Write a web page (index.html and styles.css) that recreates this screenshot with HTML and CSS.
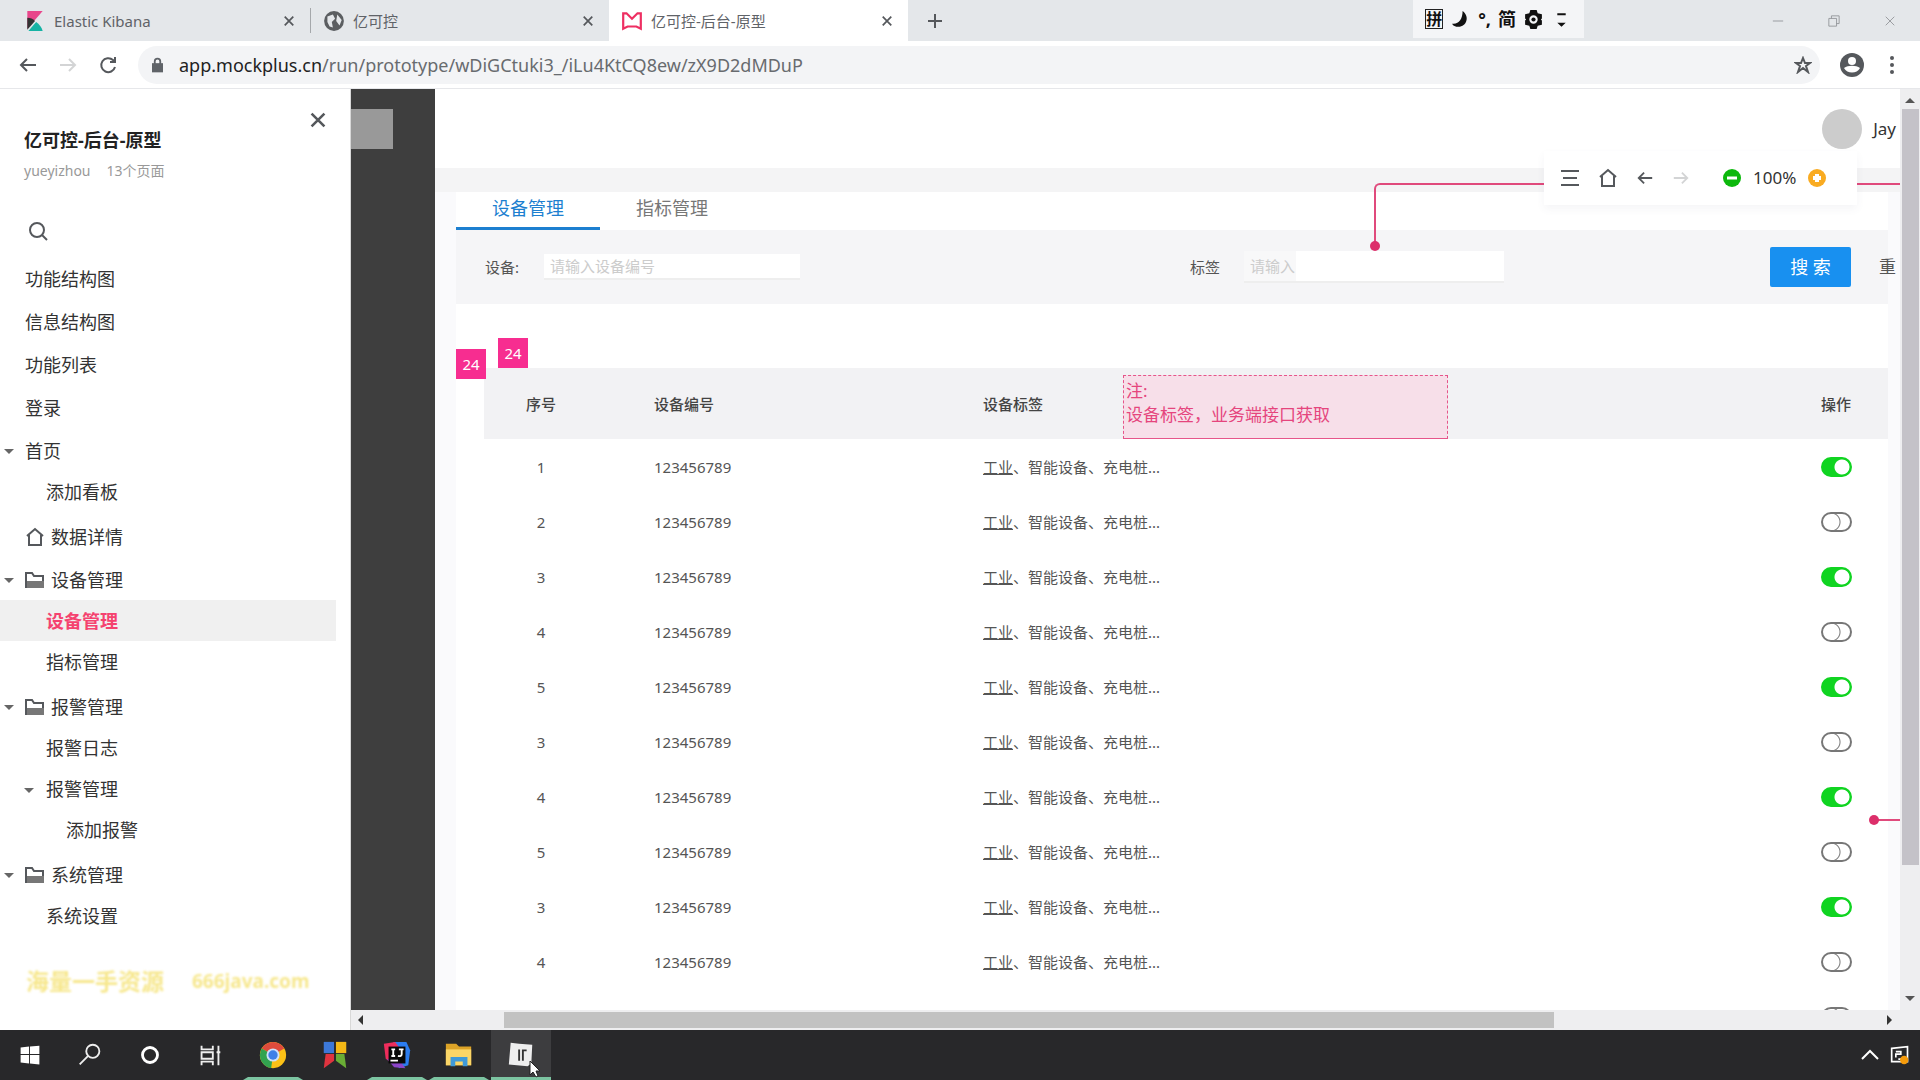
FILE: index.html
```html
<!DOCTYPE html>
<html lang="zh-CN">
<head>
<meta charset="utf-8">
<title>亿可控-后台-原型</title>
<link rel="stylesheet" href="styles.css">
</head>
<body>
<svg class="defs" aria-hidden="true">
  <symbol id="i-close" viewBox="0 0 14 14"><path d="M2 2l10 10M12 2L2 12"/></symbol>
  <symbol id="i-back" viewBox="0 0 20 20"><path d="M18 10H3M9 4l-6 6 6 6"/></symbol>
  <symbol id="i-forward" viewBox="0 0 20 20"><path d="M2 10h15M11 4l6 6-6 6"/></symbol>
  <symbol id="i-home" viewBox="0 0 20 20"><path d="M2 9l8-7 8 7M4 8v10h12V8"/></symbol>
  <symbol id="i-folder" viewBox="0 0 20 18"><path d="M1 16V2h6l2 3h9v11z"/><path class="fill" d="M2 10h17v7H2z"/></symbol>
</svg>
<header class="browser">
  <div class="tabstrip">
    <div class="btab first">
      <svg class="favicon" viewBox="0 0 20 20"><path fill="#e8478b" d="M3 1h14L3 17z"/><path fill="#333" d="M3 7c3 0 5 1 7 3l-7 8z"/><path fill="#16b3a4" d="M11 11c3 2 5 5 6 8H4z"/></svg>
      <span class="btitle">Elastic Kibana</span>
      <button class="icon-btn" aria-label="关闭标签页"><svg class="ic s14"><use href="#i-close"/></svg></button>
    </div>
    <div class="btab divided">
      <svg class="favicon" viewBox="0 0 20 20"><circle cx="10" cy="10" r="9" fill="#5b5e61"/><path fill="#e4e7ea" d="M4 6l5-2 2 4-3 3 1 5-3-1-2-4zM13 4l4 5-2 5-3-4z"/></svg>
      <span class="btitle">亿可控</span>
      <button class="icon-btn" aria-label="关闭标签页"><svg class="ic s14"><use href="#i-close"/></svg></button>
    </div>
    <div class="btab current">
      <svg class="favicon" viewBox="0 0 20 20"><path fill="none" stroke="#ee2f62" stroke-width="2" d="M2 17V3l3 0 5 5 5-5h3v14l-4-2H6z"/></svg>
      <span class="btitle">亿可控-后台-原型</span>
      <button class="icon-btn" aria-label="关闭标签页"><svg class="ic s14"><use href="#i-close"/></svg></button>
    </div>
    <button class="icon-btn newtab" aria-label="新标签页"><svg class="ic s18" viewBox="0 0 18 18"><path d="M9 2v14M2 9h14"/></svg></button>
    <div class="ime">
      <span class="ime-box">拼</span>
      <svg viewBox="0 0 20 20"><path d="M12 2c7 5 4 15-4 15-3 0-5-1-6-3 6 1 10-4 10-12z"/></svg>
      <span>°,</span>
      <span>简</span>
      <svg viewBox="0 0 20 20"><path fill-rule="evenodd" d="M7 1h6l1 3 4 1v4l-1 1 1 1v4l-4 1-1 3H7l-1-3-4-1v-4l1-1-1-1V5l4-1zM10 6a4 4 0 100 8 4 4 0 000-8z"/><circle cx="10" cy="10" r="2"/></svg>
      <svg viewBox="0 0 20 20"><path d="M6 4h8v2H6zM6 13h8l-4 4z"/></svg>
    </div>
    <div class="winbtns">
      <button class="icon-btn" aria-label="最小化"><svg class="ic s14" viewBox="0 0 14 14"><path d="M1 7h12"/></svg></button>
      <button class="icon-btn" aria-label="还原"><svg class="ic s14" viewBox="0 0 14 14"><path d="M1 4h9v9H1zM4 4V1h9v9h-3"/></svg></button>
      <button class="icon-btn" aria-label="关闭"><svg class="ic s14"><use href="#i-close"/></svg></button>
    </div>
  </div>
  <div class="addressbar">
    <button class="icon-btn" aria-label="后退"><svg class="ic s20"><use href="#i-back"/></svg></button>
    <button class="icon-btn faint" aria-label="前进"><svg class="ic s20"><use href="#i-forward"/></svg></button>
    <button class="icon-btn" aria-label="刷新"><svg class="ic s20" viewBox="0 0 20 20"><path d="M17 12a7 7 0 11-2-7l2 2M17 2v5h-5"/></svg></button>
    <div class="omnibox">
      <svg class="lock" viewBox="0 0 12 16"><path fill="#5f6368" d="M0 6h12v10H0z"/><path fill="none" stroke="#5f6368" stroke-width="2" d="M3 7V4a3 3 0 016 0v3"/></svg>
      <div class="url"><b>app.mockplus.cn</b>/run/prototype/wDiGCtuki3_/iLu4KtCQ8ew/zX9D2dMDuP</div>
      <button class="icon-btn" aria-label="收藏"><svg class="ic s18" viewBox="0 0 18 18"><path d="M9 2l2 5h5l-4 3 2 6-5-4-5 4 2-6-4-3h5z"/></svg></button>
    </div>
    <svg class="profile" viewBox="0 0 24 24"><circle cx="12" cy="12" r="12" fill="#55585c"/><circle cx="12" cy="8" r="4" fill="#fff"/><path fill="#fff" d="M4 15c4-3 12-3 16 0-3 6-13 6-16 0z"/></svg>
    <button class="icon-btn" aria-label="菜单"><svg class="dots" viewBox="0 0 4 18"><circle cx="2" cy="2" r="2"/><circle cx="2" cy="9" r="2"/><circle cx="2" cy="16" r="2"/></svg></button>
  </div>
</header>

<div class="workspace">
  <aside class="sidebar">
    <div class="side-head">
      <div>
        <h1>亿可控-后台-原型</h1>
        <p><span>yueyizhou</span><span>13个页面</span></p>
      </div>
      <button class="icon-btn" aria-label="收起"><svg class="ic s18"><use href="#i-close"/></svg></button>
    </div>
    <button class="icon-btn side-search" aria-label="搜索"><svg class="ic s20" viewBox="0 0 20 20"><circle cx="9" cy="9" r="7"/><path d="M14 14l5 5"/></svg></button>
    <ul class="tree">
      <li><a href="#">功能结构图</a></li>
      <li><a href="#">信息结构图</a></li>
      <li><a href="#">功能列表</a></li>
      <li><a href="#">登录</a></li>
      <li><a href="#" class="open">首页</a>
        <ul><li><a href="#">添加看板</a></li></ul></li>
      <li><a href="#"><svg class="ic s20"><use href="#i-home"/></svg>数据详情</a></li>
      <li><a href="#" class="open"><svg class="ic s20"><use href="#i-folder"/></svg>设备管理</a>
        <ul>
          <li><a href="#" class="active">设备管理</a></li>
          <li><a href="#">指标管理</a></li>
        </ul></li>
      <li><a href="#" class="open"><svg class="ic s20"><use href="#i-folder"/></svg>报警管理</a>
        <ul>
          <li><a href="#">报警日志</a></li>
          <li><a href="#" class="open">报警管理</a>
            <ul><li><a href="#">添加报警</a></li></ul></li>
        </ul></li>
      <li><a href="#" class="open"><svg class="ic s20"><use href="#i-folder"/></svg>系统管理</a>
        <ul><li><a href="#">系统设置</a></li></ul></li>
    </ul>
    <div class="watermark"><span class="wm-text">海量一手资源</span><span>666java.com</span></div>
  </aside>

  <div class="canvas">
    <div class="viewport">
      <div class="rail"><div class="rail-logo"></div></div>
      <main class="page">
        <div class="topbar"><span class="avatar"></span><span class="user">Jay</span></div>
        <div class="body">
          <nav class="tabs"><a href="#" class="on">设备管理</a><a href="#">指标管理</a></nav>
          <form class="filters">
            <label for="dev">设备:</label>
            <input id="dev" type="text" placeholder="请输入设备编号">
            <label for="tag" class="tag-label">标签</label>
            <input id="tag" type="text" placeholder="请输入">
            <button type="button" class="primary">搜 索</button>
            <button type="button" class="reset">重</button>
          </form>
          <section class="card">
            <span class="badge b-left">24</span>
            <span class="badge b-top">24</span>
            <div class="note">注:<br>设备标签，业务端接口获取</div>
            <table>
              <thead><tr><th class="c-no">序号</th><th class="c-code">设备编号</th><th>设备标签</th><th class="c-op">操作</th></tr></thead>
              <tbody>
                <tr><td class="c-no">1</td><td>123456789</td><td><u>工业</u>、智能设备、充电桩...</td><td class="c-op"><input type="checkbox" aria-label="启用" checked></td></tr>
                <tr><td class="c-no">2</td><td>123456789</td><td><u>工业</u>、智能设备、充电桩...</td><td class="c-op"><input type="checkbox" aria-label="启用"></td></tr>
                <tr><td class="c-no">3</td><td>123456789</td><td><u>工业</u>、智能设备、充电桩...</td><td class="c-op"><input type="checkbox" aria-label="启用" checked></td></tr>
                <tr><td class="c-no">4</td><td>123456789</td><td><u>工业</u>、智能设备、充电桩...</td><td class="c-op"><input type="checkbox" aria-label="启用"></td></tr>
                <tr><td class="c-no">5</td><td>123456789</td><td><u>工业</u>、智能设备、充电桩...</td><td class="c-op"><input type="checkbox" aria-label="启用" checked></td></tr>
                <tr><td class="c-no">3</td><td>123456789</td><td><u>工业</u>、智能设备、充电桩...</td><td class="c-op"><input type="checkbox" aria-label="启用"></td></tr>
                <tr><td class="c-no">4</td><td>123456789</td><td><u>工业</u>、智能设备、充电桩...</td><td class="c-op"><input type="checkbox" aria-label="启用" checked></td></tr>
                <tr><td class="c-no">5</td><td>123456789</td><td><u>工业</u>、智能设备、充电桩...</td><td class="c-op"><input type="checkbox" aria-label="启用"></td></tr>
                <tr><td class="c-no">3</td><td>123456789</td><td><u>工业</u>、智能设备、充电桩...</td><td class="c-op"><input type="checkbox" aria-label="启用" checked></td></tr>
                <tr><td class="c-no">4</td><td>123456789</td><td><u>工业</u>、智能设备、充电桩...</td><td class="c-op"><input type="checkbox" aria-label="启用"></td></tr>
                <tr><td></td><td></td><td></td><td class="c-op"><input type="checkbox" aria-label="启用"></td></tr>
              </tbody>
            </table>
          </section>
        </div>
      </main>
      <div class="link-line"></div>
      <div class="link-row"></div>
      <div class="floatbar">
        <svg class="ic s20" viewBox="0 0 20 20"><path d="M1 3h18M3 10h14M1 17h18"/></svg>
        <svg class="ic s20"><use href="#i-home"/></svg>
        <svg class="ic s18"><use href="#i-back"/></svg>
        <svg class="ic s18 faint"><use href="#i-forward"/></svg>
        <svg class="zoom-out s18" viewBox="0 0 18 18"><circle cx="9" cy="9" r="9" fill="#0cb80c"/><path d="M4 9h10" stroke="#fff" stroke-width="3"/></svg>
        <span>100%</span>
        <svg class="s18" viewBox="0 0 18 18"><circle cx="9" cy="9" r="9" fill="#f9ab21"/><path d="M5 9h8M9 5v8" stroke="#fff" stroke-width="4"/></svg>
      </div>
    </div>
    <div class="vbar"><i class="up"></i><div class="vthumb"></div><i class="down"></i></div>
    <div class="hbar"><i class="left"></i><div class="hthumb"></div><i class="right"></i></div>
  </div>
</div>

<footer class="taskbar">
  <button aria-label="开始"><svg viewBox="0 0 32 32"><path fill="#fff" d="M6 8l9-1v8H6zM16 7l10-1v9H16zM6 16h9v9l-9-1zM16 16h10v10l-10-1z"/></svg></button>
  <button aria-label="搜索"><svg viewBox="0 0 32 32"><g fill="none" stroke="#eee" stroke-width="2"><circle cx="19" cy="12" r="7"/><path d="M14 17l-9 9"/></g></svg></button>
  <button aria-label="Cortana"><svg viewBox="0 0 32 32"><circle cx="16" cy="16" r="8" fill="none" stroke="#fff" stroke-width="3"/></svg></button>
  <button aria-label="任务视图"><svg viewBox="0 0 32 32"><path fill="none" stroke="#eee" stroke-width="2" d="M7 6v4h12V6M7 13h12v7H7zM7 27v-4h12v4M25 6v21M23 13h4"/></svg></button>
  <div class="apps">
    <button class="run" aria-label="Chrome"><svg viewBox="0 0 32 32"><circle cx="16" cy="16" r="14" fill="#fbc116"/><path fill="#de4b3c" d="M16 16L4 9a14 14 0 0124 0z"/><path fill="#32a350" d="M16 16l-2 14A14 14 0 014 9z"/><circle cx="16" cy="16" r="7" fill="#cfe0f8"/><circle cx="16" cy="16" r="5" fill="#3f80e8"/></svg></button>
    <button aria-label="应用"><svg viewBox="0 0 32 32"><path fill="#3c78d8" d="M4 2h11v12H4z"/><path fill="#f4b916" d="M17 2h11v12H17z"/><path fill="#e0343f" d="M6 15h9v7l-11 8z"/><path fill="#6aae35" d="M17 15h9l2 15-11-8z"/></svg></button>
    <button class="run" aria-label="IDEA"><svg viewBox="0 0 32 32"><path fill="#2b7cf0" d="M12 2h14l4 9-2 16-10 3z"/><path fill="#ef2d5c" d="M2 4l12-2 6 8-8 16-8-6z"/><path fill="#8c45c8" d="M5 20l8 9 12 1-6-8z"/><path fill="#080808" d="M7 7h18v18H7z"/><path fill="none" stroke="#fff" stroke-width="2" d="M10 10h4M12 10v7M10 17h4M18 10h5M21 10v5q0 3-4 2M9 22h8"/></svg></button>
    <button class="run" aria-label="文件资源管理器"><svg viewBox="0 0 32 32"><path fill="#dca327" d="M2 4h11l3 3h13v20H2z"/><path fill="#fbd667" d="M2 10h27v17H2z"/><path fill="#3f9ad8" d="M7 18h18v10h-5v-5h-8v5H7z"/></svg></button>
    <button class="run focus" aria-label="笔记"><svg viewBox="0 0 32 32"><path fill="#eee" d="M5 3l9 1 14 1-1 20-4 3-20-2z"/><path fill="none" stroke="#333" stroke-width="2" d="M14 10v12M18 22V11h4"/></svg></button>
  </div>
  <span class="grow"></span>
  <button class="tray" aria-label="显示隐藏的图标"><svg viewBox="0 0 20 20"><path fill="none" stroke="#fff" stroke-width="2" d="M2 14l8-8 8 8"/></svg></button>
  <button class="tray" aria-label="通知"><svg viewBox="0 0 24 24"><path fill="none" stroke="#fff" stroke-width="2" d="M2 4l19-2v18H2zM7 15v-4h6V8H7M10 17h4"/><circle cx="17" cy="18" r="5" fill="#f59b0b"/></svg></button>
  <svg class="cursor" viewBox="0 0 12 18"><path fill="#fff" stroke="#222" d="M1 1v14l3-3 3 5 2-1-2-5h4z"/></svg>
</footer>
</body>
</html>
```
FILE: styles.css
```css
* { box-sizing: border-box; }
body {
  margin: 0;
  height: 100vh;
  display: flex;
  flex-direction: column;
  overflow: hidden;
  background: #fff;
  color: #333;
  font: 15px/20px "Noto Sans", "Noto Sans CJK SC", sans-serif;
}
a { color: inherit; text-decoration: none; }
button { font: inherit; color: inherit; border: 0; background: none; padding: 0; }
ul { list-style: none; margin: 0; padding: 0; }
.defs { position: absolute; width: 0; height: 0; }
.icon-btn { display: flex; }
.ic { fill: none; stroke: #55585c; stroke-width: 2; flex: none; }
.fill { fill: #777; stroke: none; }
.s14 { width: 12px; height: 12px; }
.s18 { width: 18px; height: 18px; }
.s20 { width: 20px; height: 20px; }
.faint { opacity: .25; }

/* browser chrome */
.tabstrip { display: flex; align-items: stretch; height: 41px; background: #e4e7ea; }
.btab { display: flex; align-items: center; gap: 8px; width: 299px; padding: 0 15px 0 12px; color: #5f6368; }
.btab.first { width: 310px; padding-left: 24px; }
.btab.divided { border-left: 1px solid #a5a8ab; height: 25px; align-self: center; }
.btab.current { background: #fff; }
.favicon { width: 22px; height: 22px; }
.btitle { flex: 1; }
.newtab { align-self: center; padding-left: 18px; }
.ime { display: flex; align-items: center; gap: 7px; margin-left: auto; padding: 0 12px; height: 38px; background: #f4f5f7; color: #111; font-weight: 700; font-size: 18px; }
.ime svg { width: 21px; height: 21px; fill: #111; }
.ime-box { border: 1px solid #222; font-size: 16px; line-height: 18px; }
.winbtns { display: flex; align-items: center; gap: 44px; padding: 0 24px 0 188px; opacity: .6; }
.winbtns .ic { stroke-width: 1; }
.addressbar { display: flex; align-items: center; gap: 20px; height: 48px; padding: 0 26px 0 18px; border-bottom: 1px solid #e6e7ea; }
.omnibox { flex: 1; display: flex; align-items: center; gap: 16px; height: 38px; padding: 0 8px 0 14px; border-radius: 19px; background: #f3f4f6; }
.lock { width: 11px; height: 16px; }
.url { flex: 1; font-size: 18px; line-height: 24px; color: #686b6f; }
.url b { font-weight: 400; color: #222; }
.profile { width: 24px; height: 24px; margin-right: 6px; }
.dots { width: 4px; height: 18px; fill: #55585c; }

/* prototype page tree */
.workspace { flex: 1; display: flex; min-height: 0; }
.sidebar { width: 351px; flex: none; border-right: 1px solid #d8d8d8; overflow: hidden; }
.side-head { display: flex; justify-content: space-between; align-items: flex-start; padding: 22px 23px 0 24px; }
.side-head h1 { margin: 16px 0 8px; font-size: 18px; line-height: 26px; color: #222; }
.side-head p { display: flex; gap: 16px; margin: 0; font-size: 14px; color: #999; }
.side-search { margin: 40px 0 16px 28px; }
.tree { font-size: 18px; line-height: 24px; color: #333; }
.tree a { position: relative; display: flex; align-items: center; gap: 6px; height: 43px; padding-left: 25px; }
.tree ul { margin: -1px 0 3px; }
.tree ul a { height: 41px; padding-left: 46px; }
.tree ul ul { margin: 0; }
.tree ul ul a { padding-left: 66px; }
.tree .active { margin-right: 14px; background: #f0f0f0; color: #f5426f; font-weight: 700; }
.tree .open::before { content: ""; position: absolute; left: 4px; top: 20px; border: 5px solid transparent; border-top-color: #666; border-bottom: 0; }
.tree ul .open::before { left: 24px; }
.watermark { display: flex; gap: 28px; padding: 30px 0 0 26px; font-weight: 700; font-size: 19px; line-height: 24px; color: #f3dd5c; filter: blur(1px); opacity: .7; }
.wm-text { font-size: 23px; }

/* canvas */
.canvas { flex: 1; min-width: 0; display: grid; grid-template: minmax(0, 1fr) 20px / minmax(0, 1fr) 20px; }
.viewport { position: relative; display: flex; overflow: hidden; }
.rail { width: 84px; flex: none; background: #3e3e3e; padding-top: 20px; }
.rail-logo { width: 42px; height: 40px; background: #999; }
.page { flex: 1; min-width: 0; }
.topbar { display: flex; align-items: center; justify-content: flex-end; gap: 11px; height: 79px; padding-right: 4px; }
.avatar { width: 40px; height: 40px; border-radius: 50%; background: #ccc; }
.user { font-size: 17px; }
.body { padding: 24px 12px 0 21px; background: linear-gradient(#f4f4f5 24px, #fafafc 24px); }
.tabs { display: flex; background: #fff; font-size: 18px; line-height: 24px; color: #777; }
.tabs a { width: 144px; height: 38px; padding: 4px 0; text-align: center; border-bottom: 3px solid transparent; }
.tabs .on { color: #1d7fd0; border-color: #1d7fd0; }
.filters { display: flex; align-items: center; height: 74px; padding-left: 29px; font-size: 15px; background: #f5f5f7; color: #555; }
.filters input { height: 26px; border: 0; border-bottom: 2px solid #eee; padding: 0 6px; font: inherit; background: #fff; }
.filters input::placeholder { color: #ccc; opacity: 1; }
#dev { width: 256px; margin: 0 auto 0 25px; }
#tag { width: 260px; height: 32px; margin: 0 266px 0 24px; background: linear-gradient(to right, #f8f8f9 52px, #fff 52px); }
.primary { width: 81px; height: 40px; flex: none; border-radius: 2px; background: #1890f0; color: #fff; font-size: 18px; }
.reset { width: 37px; flex: none; text-align: left; padding-left: 28px; font-size: 17px; white-space: nowrap; }
.card { position: relative; background: #fff; padding: 64px 0 0 28px; }
.badge { position: absolute; width: 30px; height: 30px; line-height: 30px; text-align: center; color: #fff; background: #f72d90; }
.b-left { left: 0; top: 45px; }
.b-top { left: 42px; top: 34px; }
.note { position: absolute; left: 667px; top: 71px; width: 325px; height: 64px; padding: 3px 2px; border: 1px dashed #e6558a; border-bottom-style: solid; background: #f7dfe9; color: #e5457d; font-size: 17px; line-height: 24px; }
table { width: 100%; border-collapse: collapse; table-layout: fixed; color: #555; }
th { height: 71px; padding: 0; text-align: left; background: #f2f2f4; color: #444; font-weight: 500; }
td { height: 55px; padding: 0; }
.c-no { width: 170px; padding-right: 56px; text-align: center; }
.c-code { width: 329px; }
.c-op { width: 104px; text-align: center; }
td input { appearance: none; display: block; width: 31px; height: 20px; margin: 0 auto; border: 2px solid #777; border-radius: 10px; background: radial-gradient(circle at 8px 8px, #fff 8px, #777 9px, #fff 10px); }
td input:checked { border-color: #10d421; background: radial-gradient(circle at 19px 8px, #fff 7px, #10d421 8px); }

/* annotations and floating player controls */
.link-line { position: absolute; right: 0; top: 94px; width: 526px; height: 63px; border: solid #e04a7c; border-width: 2px 0 0 2px; border-top-left-radius: 6px; }
.link-line::after { content: ""; position: absolute; left: -6px; bottom: -5px; width: 10px; height: 10px; border-radius: 50%; background: #dc2f6a; }
.link-row { position: absolute; right: 0; top: 730px; width: 26px; height: 2px; background: #e04a7c; }
.link-row::after { content: ""; position: absolute; left: -5px; top: -4px; width: 10px; height: 10px; border-radius: 50%; background: #dc2f6a; }
.floatbar { position: absolute; right: 43px; top: 62px; display: flex; align-items: center; gap: 18px; width: 313px; height: 54px; padding-left: 16px; background: #fff; font-size: 17px; box-shadow: 0 4px 8px rgba(80, 80, 120, .06); }
.zoom-out { margin-left: 15px; }
.floatbar span { margin: 0 -6px; }

/* scrollbars */
.vbar, .hbar { display: flex; align-items: center; background: #eeeef0; }
.vbar { flex-direction: column; }
.hbar { grid-column: 1 / -1; padding: 0 28px 0 7px; }
.vthumb { width: 17px; height: 756px; margin: 6px 0 auto; background: #c4c2c8; }
.hthumb { width: 1050px; height: 16px; margin: 0 auto 0 141px; background: #c2c2c2; }
.canvas i { border: 5px solid transparent; }
.canvas .up { border-top: 0; border-bottom-color: #555; margin-top: 9px; }
.canvas .down { border-bottom: 0; border-top-color: #555; margin-bottom: 9px; }
.canvas .left { border-left: 0; border-right-color: #333; }
.canvas .right { border-right: 0; border-left-color: #333; }

/* taskbar */
.taskbar { position: relative; display: flex; height: 50px; padding-right: 5px; background: #28282a; flex: none; }
.taskbar button { width: 60px; display: flex; align-items: center; justify-content: center; }
.taskbar svg { width: 30px; height: 30px; }
.apps { display: flex; gap: 2px; padding-left: 3px; }
.taskbar .run { border-bottom: 3px solid #7cc4a1; border-left: 5px solid transparent; border-right: 5px solid transparent; padding-top: 3px; }
.taskbar .focus { border-left: 0; border-right: 0; background: #3d3d3f; }
.grow { flex: 1; }
.taskbar .tray { width: 30px; }
.taskbar .tray svg { width: 20px; height: 20px; }
.taskbar .cursor { position: absolute; left: 529px; top: 30px; width: 12px; height: 18px; }
```
